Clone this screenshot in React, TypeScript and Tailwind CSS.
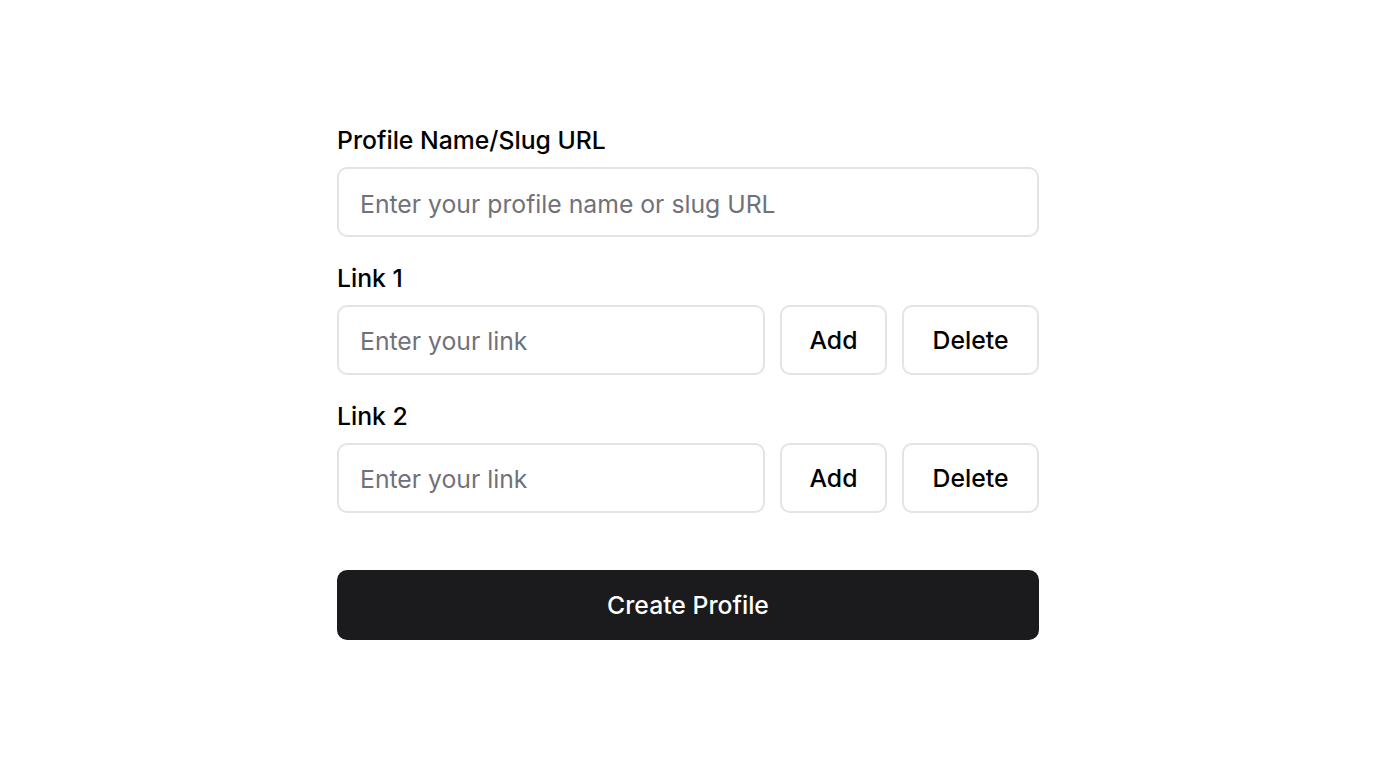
const font = { fontFamily: 'Inter, "Noto Sans", sans-serif' };

const LinkRow = ({ label }: { label: string }) => (
  <div className="flex flex-col">
    <label className="mb-[13px] text-[24.75px] leading-[28px] font-medium text-black">{label}</label>
    <div className="flex gap-[15px]">
      <input
        placeholder="Enter your link"
        className="h-[70px] min-w-0 flex-1 rounded-[10px] border-2 border-[#e4e4e7] px-[21px] pt-[2px] text-[24.75px] text-black placeholder:text-[#71717a] outline-none"
      />
      <button className="h-[70px] w-[107px] shrink-0 rounded-[10px] border-2 border-[#e4e4e7] bg-white pt-[1px] text-[24.75px] font-medium text-black">
        Add
      </button>
      <button className="h-[70px] w-[137px] shrink-0 rounded-[10px] border-2 border-[#e4e4e7] bg-white pt-[1px] text-[24.75px] font-medium text-black">
        Delete
      </button>
    </div>
  </div>
);

export default function App() {
  return (
    <div className="flex min-h-[768px] justify-center bg-white pt-[126px]" style={font}>
      <form className="flex w-[702px] flex-col gap-[27px]" onSubmit={(e) => e.preventDefault()}>
        <div className="flex flex-col">
          <label className="mb-[13px] text-[24.75px] leading-[28px] font-medium text-black">Profile Name/Slug URL</label>
          <input
            placeholder="Enter your profile name or slug URL"
            className="h-[70px] w-full rounded-[10px] border-2 border-[#e4e4e7] px-[21px] pt-[3px] text-[24.75px] text-black placeholder:text-[#71717a] outline-none"
          />
        </div>
        <LinkRow label="Link 1" />
        <LinkRow label="Link 2" />
        <button
          type="submit"
          className="mt-[30px] h-[70px] w-full rounded-[10px] bg-[#1b1b1d] pt-[2px] text-[24.75px] font-medium text-white"
        >
          Create Profile
        </button>
      </form>
    </div>
  );
}
